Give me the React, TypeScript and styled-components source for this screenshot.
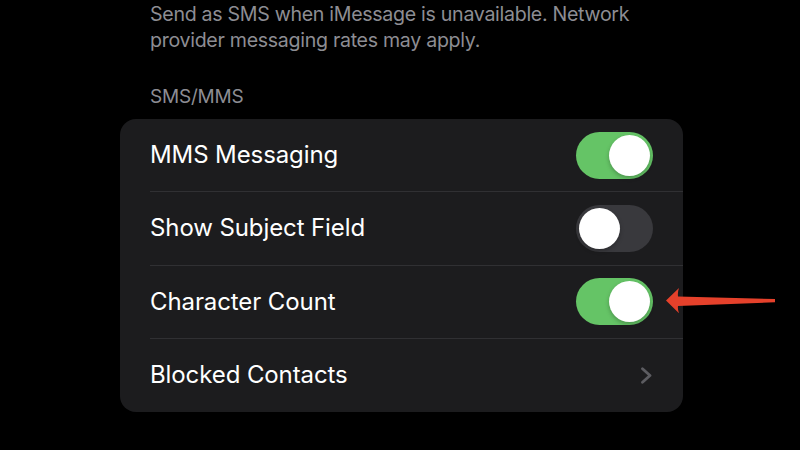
import React from 'react';
import styled, { createGlobalStyle } from 'styled-components';

const GlobalStyle = createGlobalStyle`
    html, body {
        margin: 0;
        padding: 0;
        background: #000;
        height: 100%;
        overflow: hidden;
    }
    body {
        font-family: Inter, "Noto Sans", "Liberation Sans", sans-serif;
        -webkit-font-smoothing: antialiased;
    }
`;

interface Setting {
    label: string;
    kind: 'toggle' | 'link';
    on?: boolean;
}

const settings: Setting[] = [
    { label: 'MMS Messaging', kind: 'toggle', on: true },
    { label: 'Show Subject Field', kind: 'toggle', on: false },
    { label: 'Character Count', kind: 'toggle', on: true },
    { label: 'Blocked Contacts', kind: 'link' },
];

const Chevron: React.FC = () => (
    <svg width="13" height="17" viewBox="0 0 13 17">
        <path d="M2.5 1.8 L10 8.5 L2.5 15.2" fill="none" stroke="#5c5c61" strokeWidth="2.8" strokeLinecap="round" strokeLinejoin="round" />
    </svg>
);

const RedArrow: React.FC = () => (
    <ArrowSvg width="120" height="40" viewBox="0 0 120 40">
        <path d="M1 20.5 L14 8 Q12.5 12 13 16.5 L110 19 L110 22.3 L13 26 Q12.5 29.5 14 33.3 Z" fill="#e5412b" />
    </ArrowSvg>
);

const App: React.FC = () => (
    <Page>
        <GlobalStyle />
        <Description>
            Send as SMS when iMessage is unavailable. Network
            <br />
            provider messaging rates may apply.
        </Description>
        <SectionHeader>SMS/MMS</SectionHeader>
        <Card>
            {settings.map((s, i) => (
                <Row key={s.label}>
                    <RowInner last={i === settings.length - 1}>
                        <Label>{s.label}</Label>
                        {s.kind === 'toggle' ? (
                            <Toggle on={!!s.on}>
                                <Knob on={!!s.on} />
                            </Toggle>
                        ) : (
                            <Chevron />
                        )}
                    </RowInner>
                </Row>
            ))}
        </Card>
        <RedArrow />
    </Page>
);

export default App;

const Page = styled.div`
    position: relative;
    width: 800px;
    height: 450px;
    padding: 1px 0 0 120px;
    box-sizing: border-box;
    background: #000;
`;

const Description = styled.div`
    padding-left: 30px;
    font-size: 19.6px;
    line-height: 26px;
    color: #8d8d93;
    letter-spacing: -0.3px;
`;

const SectionHeader = styled.div`
    margin-top: 32px;
    padding-left: 30px;
    font-size: 19px;
    line-height: 24px;
    color: #8d8d93;
    letter-spacing: -0.2px;
    margin-bottom: 10px;
`;

const Card = styled.div`
    width: 563px;
    background: #1c1c1e;
    border-radius: 16px;
    overflow: hidden;
`;

const Row = styled.div`
    padding-left: 30px;
`;

const RowInner = styled.div<{ last: boolean }>`
    height: 73.25px;
    box-sizing: border-box;
    display: flex;
    align-items: center;
    justify-content: space-between;
    padding-right: 30px;
    border-bottom: ${({ last }) => (last ? 'none' : '1px solid #303033')};
`;

const Label = styled.span`
    font-size: 24px;
    color: #fff;
    letter-spacing: -0.1px;
    margin-top: -1px;
`;

const Toggle = styled.div<{ on: boolean }>`
    width: 77px;
    height: 47px;
    border-radius: 24px;
    background: ${({ on }) => (on ? '#65c466' : '#39393d')};
    display: flex;
    align-items: center;
    justify-content: ${({ on }) => (on ? 'flex-end' : 'flex-start')};
    padding: 0 3px;
    box-sizing: border-box;
`;

const Knob = styled.div<{ on: boolean }>`
    width: 41px;
    height: 41px;
    border-radius: 50%;
    background: #fff;
    box-shadow: 0 2px 4px rgba(0, 0, 0, 0.25);
`;

const ArrowSvg = styled.svg`
    position: absolute;
    left: 665px;
    top: 280px;
`;
